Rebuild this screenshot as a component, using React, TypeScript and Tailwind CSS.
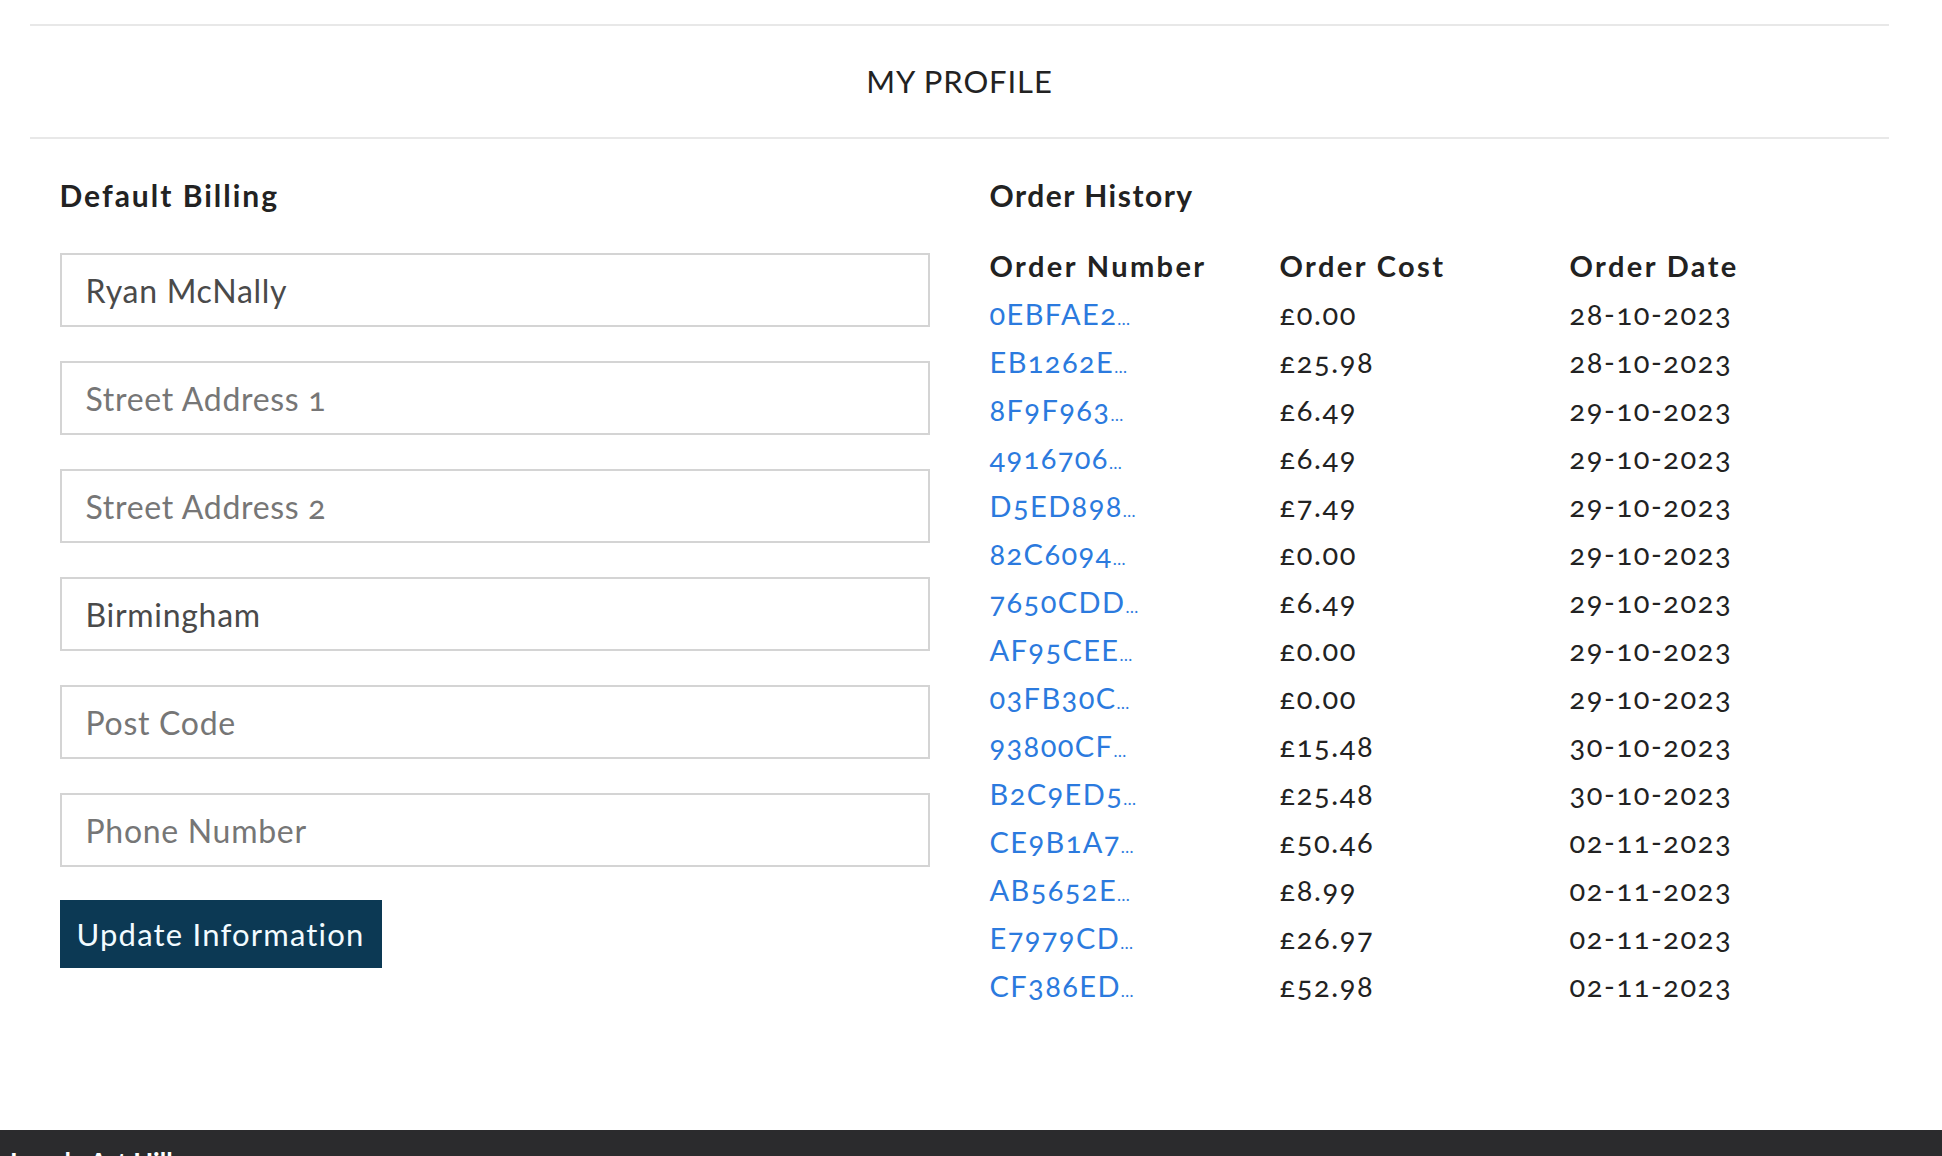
import React from "react";

const orders: [string, string, string][] = [
  ["0EBFAE2", "£0.00", "28-10-2023"],
  ["EB1262E", "£25.98", "28-10-2023"],
  ["8F9F963", "£6.49", "29-10-2023"],
  ["4916706", "£6.49", "29-10-2023"],
  ["D5ED898", "£7.49", "29-10-2023"],
  ["82C6094", "£0.00", "29-10-2023"],
  ["7650CDD", "£6.49", "29-10-2023"],
  ["AF95CEE", "£0.00", "29-10-2023"],
  ["03FB30C", "£0.00", "29-10-2023"],
  ["93800CF", "£15.48", "30-10-2023"],
  ["B2C9ED5", "£25.48", "30-10-2023"],
  ["CE9B1A7", "£50.46", "02-11-2023"],
  ["AB5652E", "£8.99", "02-11-2023"],
  ["E7979CD", "£26.97", "02-11-2023"],
  ["CF386ED", "£52.98", "02-11-2023"],
];

function Field({ value, placeholder }: { value?: string; placeholder: string }) {
  return (
    <input
      defaultValue={value}
      placeholder={placeholder}
      className="block w-full h-[74px] border-2 border-[#d4d4d4] bg-white px-[24px] text-[32px] tracking-[0.7px] text-[#4a4a4a] placeholder:text-[#767676] outline-none oldstyle-nums"
    />
  );
}

export default function App() {
  return (
    <div className="bg-white font-['Lato','Open_Sans',sans-serif] text-[#222]">
      <div className="min-h-[1130px]">
        <div className="ml-[30px] w-[1859px] pt-[24px]">
          <div className="h-[115px] border-y-2 border-[#e8e8e8] flex items-center justify-center">
            <h1 className="text-[31px] font-normal tracking-[0.9px] text-[#222]">MY PROFILE</h1>
          </div>
          <div className="flex gap-[60px] pl-[29.5px]">
            <div className="w-[870px]">
              <h2 className="mt-[38px] text-[30px] leading-[36px] tracking-[2px] font-bold text-[#222]">Default Billing</h2>
              <div className="mt-[40px] flex flex-col gap-[34px]">
                <Field value="Ryan McNally" placeholder="Full Name" />
                <Field placeholder="Street Address 1" />
                <Field placeholder="Street Address 2" />
                <Field value="Birmingham" placeholder="City" />
                <Field placeholder="Post Code" />
                <Field placeholder="Phone Number" />
              </div>
              <button className="mt-[33px] w-[322px] h-[68px] bg-[#0c3954] text-[#f2fbff] text-[31px] tracking-[1.2px] flex items-center justify-center">
                Update Information
              </button>
            </div>
            <div className="w-[870px]">
              <h2 className="mt-[38px] text-[30px] leading-[36px] tracking-[1.5px] font-bold text-[#222]">Order History</h2>
              <div className="mt-[29px] grid grid-cols-[290px_290px_290px]">
                <div className="text-[29px] leading-[48px] tracking-[2.4px] font-bold">Order Number</div>
                <div className="text-[29px] leading-[48px] tracking-[2.4px] font-bold">Order Cost</div>
                <div className="text-[29px] leading-[48px] tracking-[2.4px] font-bold">Order Date</div>
                {orders.map(([id, cost, date]) => (
                  <React.Fragment key={id}>
                    <a href="#" className="h-[48px] text-[29px] leading-[48px] tracking-[1.4px] text-[#2b7ade] oldstyle-nums">
                      {id}
                      <span className="text-[17px] leading-none tracking-[-0.5px]">…</span>
                    </a>
                    <div className="h-[48px] text-[29px] leading-[48px] tracking-[1.6px] text-[#222] oldstyle-nums">{cost}</div>
                    <div className="h-[48px] text-[29px] leading-[48px] tracking-[1.6px] text-[#222] oldstyle-nums">{date}</div>
                  </React.Fragment>
                ))}
              </div>
            </div>
          </div>
        </div>
      </div>
      <footer className="bg-[#2b2b2d] h-[26px] overflow-hidden px-[10px] pt-[16px]">
        <div className="text-white text-[26px] leading-[32px] font-bold">Lovely Art Hill</div>
      </footer>
    </div>
  );
}
